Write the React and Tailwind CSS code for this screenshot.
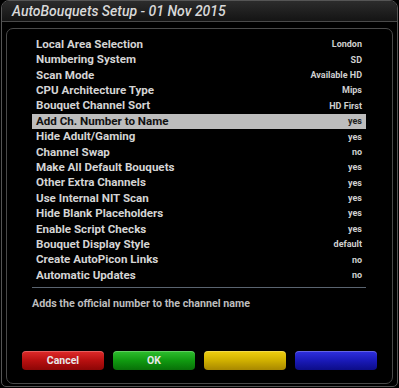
const rows = [
  ['Local Area Selection', 'London'],
  ['Numbering System', 'SD'],
  ['Scan Mode', 'Available HD'],
  ['CPU Architecture Type', 'Mips'],
  ['Bouquet Channel Sort', 'HD First'],
  ['Add Ch. Number to Name', 'yes'],
  ['Hide Adult/Gaming', 'yes'],
  ['Channel Swap', 'no'],
  ['Make All Default Bouquets', 'yes'],
  ['Other Extra Channels', 'yes'],
  ['Use Internal NIT Scan', 'yes'],
  ['Hide Blank Placeholders', 'yes'],
  ['Enable Script Checks', 'yes'],
  ['Bouquet Display Style', 'default'],
  ['Create AutoPicon Links', 'no'],
  ['Automatic Updates', 'no'],
]

const SELECTED = 5

function ColorButton({ className, label }) {
  return (
    <div
      className={`w-[82px] shrink-0 h-[19px] rounded-[4px] flex items-center justify-center text-[10.5px] font-bold text-[#e8e8e8] shadow-[inset_0_1px_0_rgba(255,255,255,0.25)] ${className}`}
    >
      {label}
    </div>
  )
}

export default function App() {
  return (
    <div
      className="w-[399px] h-[388px] bg-black overflow-hidden px-[1px]"
      style={{ fontFamily: 'Roboto, "Liberation Sans", sans-serif' }}
    >
      <div className="h-[387px] flex flex-col border border-[#555] rounded-t-[8px] rounded-b-[5px] bg-black">
        <div className="h-[21px] shrink-0 flex items-center pl-[10px] bg-gradient-to-b from-[#2c2c2c] to-[#141414] border-b border-[#4a4a4a] rounded-t-[7px]">
          <span className="text-[14px] italic font-medium text-[#d8d8d8]">
            AutoBouquets Setup - 01 Nov 2015
          </span>
        </div>
        <div className="flex-1 mt-[6px] mx-[4px] mb-[2px] border border-[#4a4a4a] rounded-[7px] flex flex-col pt-[8px] pl-[25px] pr-[26px]">
          <div className="flex flex-col">
            {rows.map(([label, value], i) => (
              <div
                key={label}
                className={`h-[15.4px] flex items-center justify-between pl-[4px] pr-[4px] ${
                  i === SELECTED ? 'bg-[#bdbdbd] text-[#111]' : 'text-[#d4d4d4]'
                }`}
              >
                <span className="text-[11.6px] font-bold leading-none">{label}</span>
                <span className={`text-[9px] font-bold leading-none ${i === SELECTED ? 'text-[#222]' : 'text-[#cfcfcf]'}`}>
                  {value}
                </span>
              </div>
            ))}
          </div>
          <div className="mt-[4px] h-px bg-[#5a6470]" />
          <div className="mt-[8px] text-[10.7px] font-bold text-[#bdbdbd]">
            Adds the official number to the channel name
          </div>
          <div className="flex-1" />
          <div className="flex gap-[9px] -ml-[10px] -mr-[10px] mb-[13px]">
            <ColorButton className="bg-gradient-to-b from-[#e02a2a] via-[#b81010] to-[#8c0606]" label="Cancel" />
            <ColorButton className="bg-gradient-to-b from-[#2ec02e] via-[#109a10] to-[#087008]" label="OK" />
            <ColorButton className="bg-gradient-to-b from-[#f0d010] via-[#d0b000] to-[#a88800]" label="" />
            <ColorButton className="bg-gradient-to-b from-[#3030e0] via-[#1a1ab8] to-[#0c0c88]" label="" />
          </div>
        </div>
      </div>
    </div>
  )
}
